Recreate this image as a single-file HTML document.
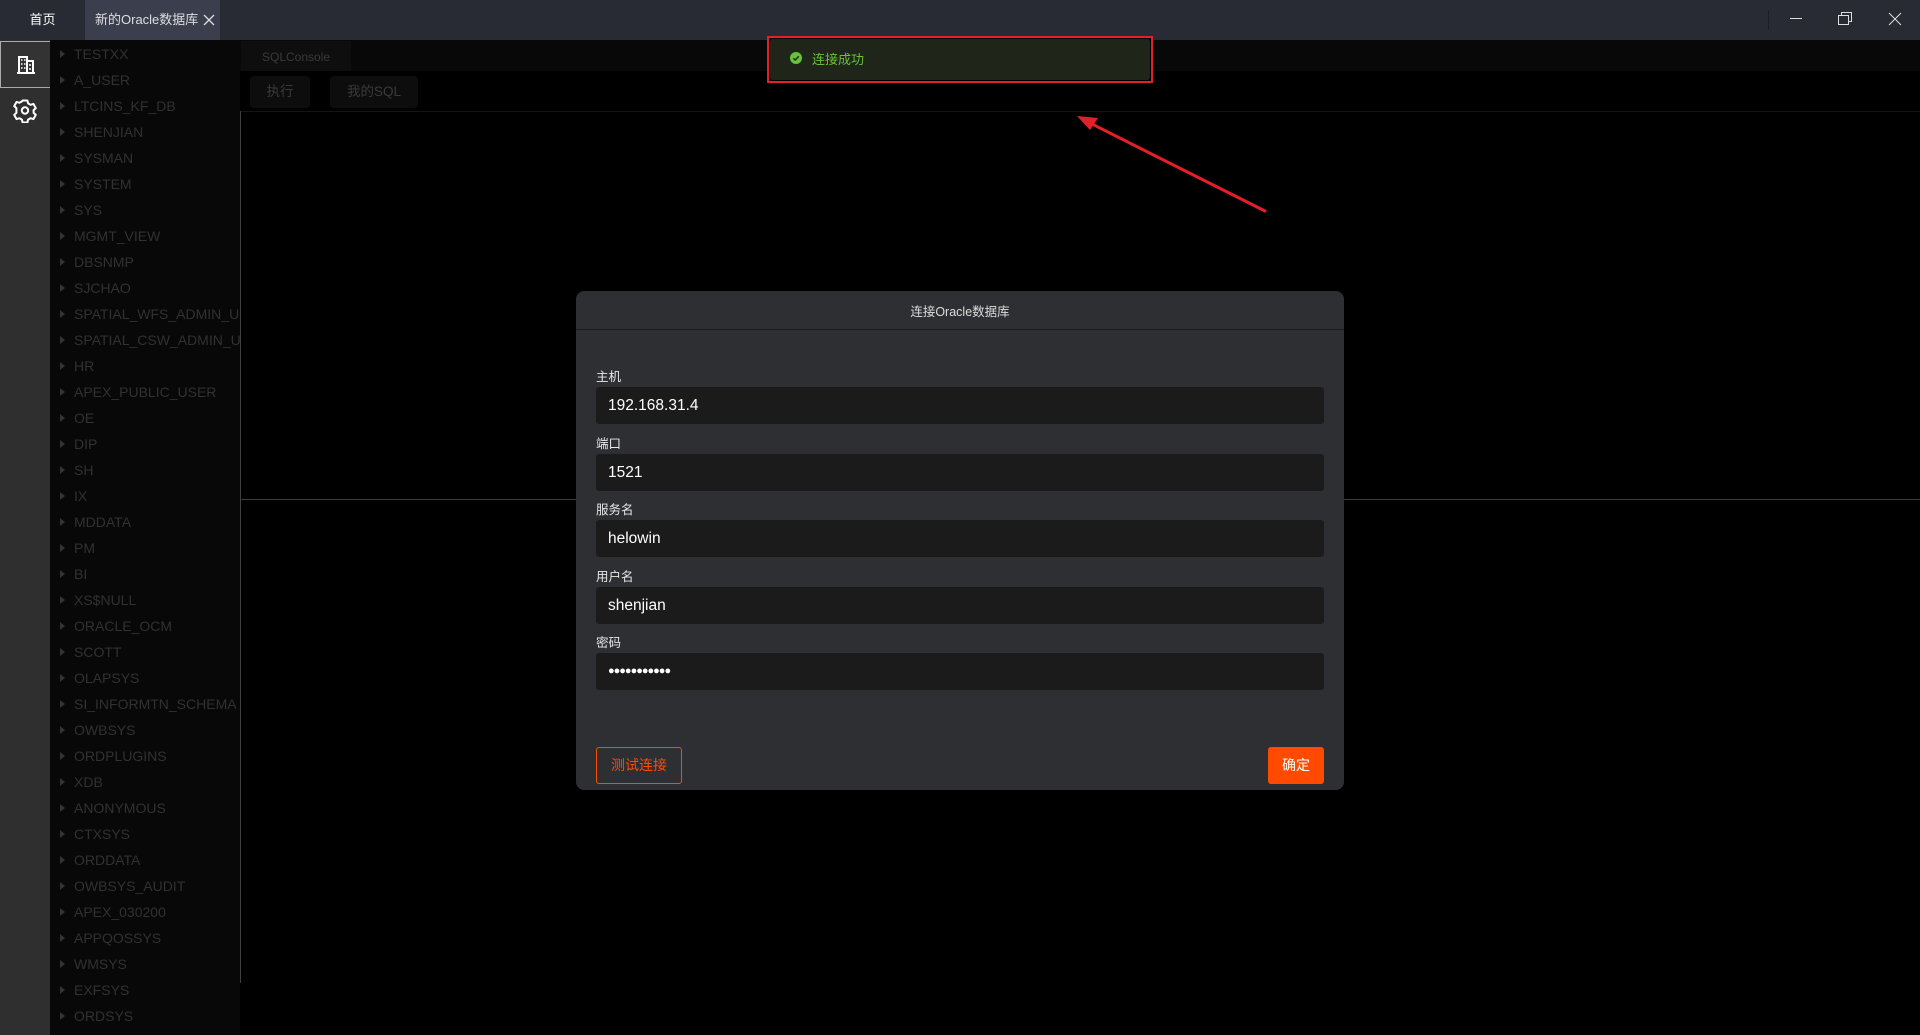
<!DOCTYPE html>
<html><head><meta charset="utf-8">
<style>
*{margin:0;padding:0;box-sizing:border-box}
body{width:1920px;height:1035px;background:#000;overflow:hidden;position:relative;font-family:"Liberation Sans","Noto Sans CJK SC",sans-serif}
.abs{position:absolute}
.top{left:0;top:0;width:1920px;height:40px;background:#282b34}
.tab1{left:0;top:0;width:85px;height:40px;color:#fff;font-size:13px;line-height:40px;text-align:center}
.tab2{left:85px;top:0;width:135px;height:40px;background:#3b3f4d;color:#ddd;font-size:13px;line-height:40px;padding-left:10px}
.side{left:0;top:40px;width:50px;height:995px;background:#2f2f2f}
.tree{left:50px;top:40px;width:190px;height:995px;background:#080808}
.item{position:absolute;left:0;height:26px;line-height:26px;color:#313131;font-size:14px;white-space:nowrap;width:190px;overflow:hidden}
.item:before{content:"";position:absolute;left:10px;top:9px;border-left:5px solid #333;border-top:4px solid transparent;border-bottom:4px solid transparent}
.item span{position:absolute;left:24px}
.field label{display:block;color:#e8e8e8;font-size:12.5px;height:17px}
</style></head><body>
<div class="abs top"></div>
<div class="abs tab1">首页</div>
<div class="abs tab2">新的Oracle数据库<svg class="abs" style="left:118px;top:14px" width="12" height="12" viewBox="0 0 12 12"><path d="M1 1L11 11M11 1L1 11" stroke="#ddd" stroke-width="1.3"/></svg></div>
<div class="abs" style="left:1768px;top:10px;width:1px;height:20px;background:#1c1e24"></div>
<svg class="abs" style="left:1789px;top:12px" width="14" height="14"><path d="M1 6.5H13" stroke="#ddd" stroke-width="1"/></svg>
<svg class="abs" style="left:1837px;top:11px" width="16" height="16"><rect x="1.5" y="4.5" width="10" height="9" fill="none" stroke="#ddd"/><path d="M4.5 4.5V1.5H14.5V10.5H11.5" fill="none" stroke="#ddd"/></svg>
<svg class="abs" style="left:1888px;top:12px" width="14" height="14"><path d="M1 1L13 13M13 1L1 13" stroke="#ddd" stroke-width="1"/></svg>

<div class="abs side"></div>
<div class="abs" style="left:0;top:41px;width:52px;height:47px;border:1px solid #aaa;background:#333"></div>
<svg class="abs" style="left:15px;top:53px" width="22" height="22" viewBox="0 0 22 22"><path d="M2 20H20M4 20V4H12V20M12 8H18V20" fill="none" stroke="#fff" stroke-width="2"/><path d="M6 7h1.5M9 7h1.5M6 11h1.5M9 11h1.5M6 15h1.5M9 15h1.5M14 12h2M14 16h2" stroke="#fff" stroke-width="1.6"/></svg>
<svg class="abs" style="left:13px;top:99px" width="24" height="24" viewBox="0 0 24 24"><path d="M9.6 2.5h4.8l.7 2.9 2.4 1.4 2.9-.9 2.4 4.2-2.2 2 0 2.8 2.2 2-2.4 4.2-2.9-.9-2.4 1.4-.7 2.9H9.6l-.7-2.9-2.4-1.4-2.9.9-2.4-4.2 2.2-2V10.1l-2.2-2 2.4-4.2 2.9.9 2.4-1.4z" fill="none" stroke="#fff" stroke-width="2" stroke-linejoin="round" transform="translate(0 -1)"/><circle cx="12" cy="11.5" r="3.2" fill="none" stroke="#fff" stroke-width="2"/></svg>

<div class="abs tree">
<div class="item" style="top:1px"><span>TESTXX</span></div>
<div class="item" style="top:27px"><span>A_USER</span></div>
<div class="item" style="top:53px"><span>LTCINS_KF_DB</span></div>
<div class="item" style="top:79px"><span>SHENJIAN</span></div>
<div class="item" style="top:105px"><span>SYSMAN</span></div>
<div class="item" style="top:131px"><span>SYSTEM</span></div>
<div class="item" style="top:157px"><span>SYS</span></div>
<div class="item" style="top:183px"><span>MGMT_VIEW</span></div>
<div class="item" style="top:209px"><span>DBSNMP</span></div>
<div class="item" style="top:235px"><span>SJCHAO</span></div>
<div class="item" style="top:261px"><span>SPATIAL_WFS_ADMIN_USR</span></div>
<div class="item" style="top:287px"><span>SPATIAL_CSW_ADMIN_USR</span></div>
<div class="item" style="top:313px"><span>HR</span></div>
<div class="item" style="top:339px"><span>APEX_PUBLIC_USER</span></div>
<div class="item" style="top:365px"><span>OE</span></div>
<div class="item" style="top:391px"><span>DIP</span></div>
<div class="item" style="top:417px"><span>SH</span></div>
<div class="item" style="top:443px"><span>IX</span></div>
<div class="item" style="top:469px"><span>MDDATA</span></div>
<div class="item" style="top:495px"><span>PM</span></div>
<div class="item" style="top:521px"><span>BI</span></div>
<div class="item" style="top:547px"><span>XS$NULL</span></div>
<div class="item" style="top:573px"><span>ORACLE_OCM</span></div>
<div class="item" style="top:599px"><span>SCOTT</span></div>
<div class="item" style="top:625px"><span>OLAPSYS</span></div>
<div class="item" style="top:651px"><span>SI_INFORMTN_SCHEMA</span></div>
<div class="item" style="top:677px"><span>OWBSYS</span></div>
<div class="item" style="top:703px"><span>ORDPLUGINS</span></div>
<div class="item" style="top:729px"><span>XDB</span></div>
<div class="item" style="top:755px"><span>ANONYMOUS</span></div>
<div class="item" style="top:781px"><span>CTXSYS</span></div>
<div class="item" style="top:807px"><span>ORDDATA</span></div>
<div class="item" style="top:833px"><span>OWBSYS_AUDIT</span></div>
<div class="item" style="top:859px"><span>APEX_030200</span></div>
<div class="item" style="top:885px"><span>APPQOSSYS</span></div>
<div class="item" style="top:911px"><span>WMSYS</span></div>
<div class="item" style="top:937px"><span>EXFSYS</span></div>
<div class="item" style="top:963px"><span>ORDSYS</span></div>
</div>

<div class="abs" style="left:240px;top:40px;width:1680px;height:31px;background:#080808"></div>
<div class="abs" style="left:241px;top:41px;width:110px;height:30px;background:#0e0e0e;color:#3a3a3a;font-size:12px;line-height:32px;padding-left:21px">SQLConsole</div>
<div class="abs" style="left:250px;top:76px;width:60px;height:32px;background:#0d0d0d;border-radius:3px;color:#3a3a3a;font-size:13.5px;line-height:32px;text-align:center">执行</div>
<div class="abs" style="left:330px;top:76px;width:88px;height:32px;background:#0d0d0d;border-radius:3px;color:#3a3a3a;font-size:13.5px;line-height:32px;text-align:center">我的SQL</div>
<div class="abs" style="left:240px;top:111px;width:1680px;height:1px;background:#151515"></div>
<div class="abs" style="left:240px;top:111px;width:1px;height:872px;background:#3e3e3e"></div>
<div class="abs" style="left:240px;top:499px;width:1680px;height:1px;background:#3e3e3e"></div>

<div class="abs" style="left:767px;top:36px;width:386px;height:47px;border:2px solid #e3202a;background:#000"></div>
<div class="abs" style="left:770px;top:39px;width:380px;height:41px;background:#1f2619;border-radius:3px"></div>
<svg class="abs" style="left:790px;top:52px" width="12" height="12" viewBox="0 0 12 12"><circle cx="6" cy="6" r="6" fill="#67c23a"/><path d="M3.3 6.2L5.2 8L8.8 4.3" fill="none" stroke="#1f2619" stroke-width="1.4"/></svg>
<div class="abs" style="left:812px;top:49px;color:#67c23a;font-size:13px">连接成功</div>
<svg class="abs" style="left:1070px;top:110px" width="210" height="110"><path d="M195 101L14 10" stroke="#e3202a" stroke-width="3" stroke-linecap="round"/><path d="M7 6L28 8L20 20Z" fill="#e3202a"/></svg>

<div class="abs" style="left:576px;top:291px;width:768px;height:499px;background:#2e2f33;border-radius:8px"></div>
<div class="abs" style="left:576px;top:329px;width:768px;height:1px;background:#1c1c1f"></div>
<div class="abs" style="left:576px;top:301px;width:768px;text-align:center;color:#ddd;font-size:12.5px">连接Oracle数据库</div>
<div class="abs" style="left:596px;top:366px;width:728px">
<div class="field"><label>主机</label><div style="margin-top:4px;height:37px;background:#1b1b1c;border-radius:3px;color:#fff;font-size:15.5px;line-height:37px;padding-left:12px">192.168.31.4</div></div>
<div class="field" style="margin-top:8.5px"><label>端口</label><div style="margin-top:4px;height:37px;background:#1b1b1c;border-radius:3px;color:#fff;font-size:15.5px;line-height:37px;padding-left:12px">1521</div></div>
<div class="field" style="margin-top:8.5px"><label>服务名</label><div style="margin-top:4px;height:37px;background:#1b1b1c;border-radius:3px;color:#fff;font-size:15.5px;line-height:37px;padding-left:12px">helowin</div></div>
<div class="field" style="margin-top:8.5px"><label>用户名</label><div style="margin-top:4px;height:37px;background:#1b1b1c;border-radius:3px;color:#fff;font-size:15.5px;line-height:37px;padding-left:12px">shenjian</div></div>
<div class="field" style="margin-top:8.5px"><label>密码</label><div style="margin-top:4px;height:37px;background:#1b1b1c;border-radius:3px;color:#fff;font-size:11px;line-height:37px;padding-left:12px;letter-spacing:-1px">●●●●●●●●●●●</div></div>
</div>
<div class="abs" style="left:596px;top:747px;width:86px;height:37px;border:1px solid #ff4a00;border-radius:3px;color:#ff4a00;font-size:14px;line-height:35px;text-align:center">测试连接</div>
<div class="abs" style="left:1268px;top:747px;width:56px;height:37px;background:#ff4a00;border-radius:3px;color:#fff;font-size:14px;line-height:37px;text-align:center">确定</div>
</body></html>
